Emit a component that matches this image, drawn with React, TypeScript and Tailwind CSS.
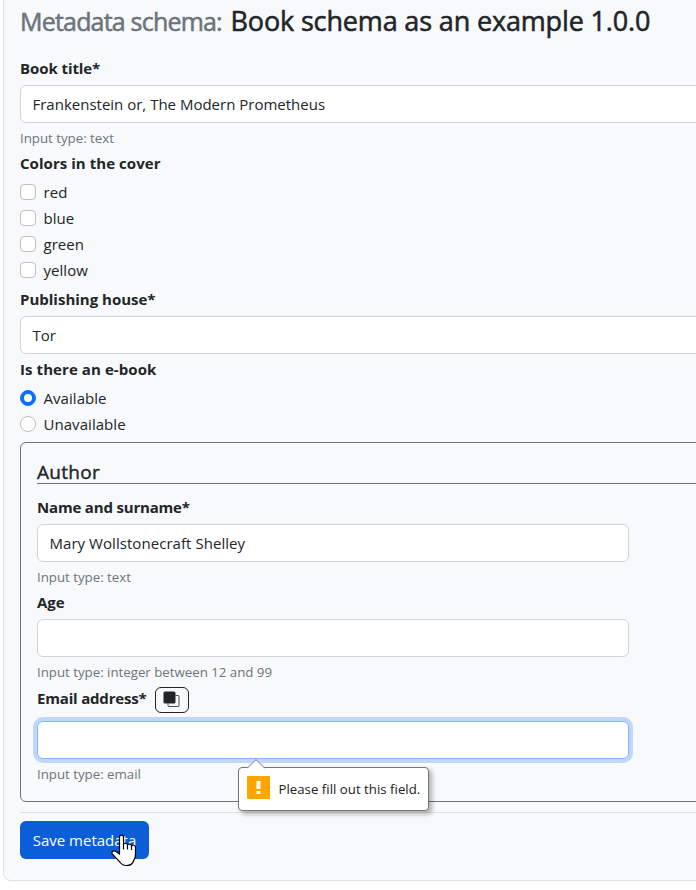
import type { ReactNode } from "react";

function Label({ children, className = "" }: { children: ReactNode; className?: string }) {
  return <div className={`h-7 text-[15px] font-bold leading-[22px] whitespace-nowrap ${className}`}>{children}</div>;
}

function Help({ children }: { children: ReactNode }) {
  return <div className="h-[29px] pt-1 text-[13.3px] leading-[22px] tracking-[-0.02px] text-[#6c757d] whitespace-nowrap">{children}</div>;
}

function Field({ value = "", focused = false, className = "" }: { value?: string; focused?: boolean; className?: string }) {
  return (
    <div
      className={`h-[38px] rounded-md border bg-white pr-3 pl-[11.5px] text-[15px] leading-9 ${
        focused ? "border-[#86b7fe] ring-4 ring-[#bed7fb]" : "border-[#ced4da]"
      } ${className}`}
    >
      {value}
    </div>
  );
}

function Choice({ label, radio = false, checked = false }: { label: string; radio?: boolean; checked?: boolean }) {
  return (
    <div className="flex h-[26px] items-start">
      <span
        className={`mt-1 mr-[7.5px] size-4 shrink-0 border ${radio ? "rounded-full" : "rounded"} ${
          checked ? "flex items-center justify-center border-[#0d6efd] bg-[#0d6efd]" : "border-[#bfbfbf] bg-white"
        }`}
      >
        {checked && <span className="size-2 rounded-full bg-white" />}
      </span>
      <span className="text-[15px] leading-6 tracking-[0.05px]">{label}</span>
    </div>
  );
}

export default function App() {
  return (
    <div className="relative h-[890px] w-full overflow-hidden bg-white font-['Open_Sans','Noto_Sans',sans-serif] text-[#212529]">
      <div className="ml-[3px] h-[881px] w-[760px] rounded-b-lg border-b border-l border-[#dee2e6] bg-[#f8f9fa] px-4">
        <h1 className="flex h-[57px] items-baseline pt-[4px] leading-[34px] whitespace-nowrap [-webkit-text-stroke:0.55px]">
          <span className="w-[210.5px] text-[25px] tracking-[-0.8px] text-[#6c757d]">Metadata schema:</span>
          <span className="text-[27px] tracking-[-0.15px]">Book schema as an example 1.0.0</span>
        </h1>
        <Label className="tracking-[-0.08px]">Book title*</Label>
        <Field value="Frankenstein or, The Modern Prometheus" />
        <Help>Input type: text</Help>
        <Label className="tracking-[0.05px]">Colors in the cover</Label>
        <Choice label="red" />
        <Choice label="blue" />
        <Choice label="green" />
        <Choice label="yellow" />
        <div className="mt-1">
          <Label>Publishing house*</Label>
        </div>
        <Field value="Tor" />
        <div className="mt-1">
          <Label className="tracking-[0.08px]">Is there an e-book</Label>
        </div>
        <Choice label="Available" radio checked />
        <Choice label="Unavailable" radio />

        <section className="mt-1 h-[360px] rounded-md border border-[#6c757d] px-4 pt-4">
          <h2 className="mb-3 h-[25px] border-b border-[#6c757d] text-[19px] leading-[26px] tracking-[0.3px] [-webkit-text-stroke:0.4px]">
            Author
          </h2>
          <Label className="tracking-[-0.18px]">Name and surname*</Label>
          <Field value="Mary Wollstonecraft Shelley" className="w-[592px] tracking-[0.05px]" />
          <Help>Input type: text</Help>
          <Label>Age</Label>
          <Field className="w-[592px]" />
          <Help>Input type: integer between 12 and 99</Help>
          <div className="flex h-[35px] items-start pt-px">
            <Label className="w-[110px] tracking-[-0.18px]">Email address*</Label>
            <button className="ml-2 flex h-[26px] w-[34px] items-center justify-center rounded-md border border-[#212529]">
              <svg width="18" height="18" viewBox="0 0 18 18">
                <path d="M12.5 4.5h2.500a1 1 0 0 1 1 1v9a1 1 0 0 1-1 1h-9a1 1 0 0 1-1-1V12.500" fill="none" stroke="#212529" strokeWidth="0.8" />
                <rect x="0.500" y="0.500" width="12" height="12" rx="1.500" fill="#212529" />
              </svg>
            </button>
          </div>
          <Field focused className="w-[592px]" />
          <Help>Input type: email</Help>
        </section>
        <hr className="mt-[10px] border-[#dee2e6]" />
        <button className="mt-2 h-[38px] w-[129px] rounded-md bg-[#0b5ed7] text-[15px] leading-[38px] whitespace-nowrap text-white">
          Save metadata
        </button>
      </div>

      <div className="absolute top-[767px] left-[238px] flex h-[44px] w-[191px] items-center rounded border border-[#767676] bg-white pl-2 text-[13.2px] text-[#212121] shadow-[3px_3px_5px_rgba(0,0,0,0.3)]">
        <svg className="absolute -top-[9px] left-[8px]" width="18" height="10" viewBox="0 0 18 10">
          <path d="M0.5 9 9 0.5 17.5 9V10H.5Z" fill="white" />
          <path d="M0.5 8.9 9 .6 17.5 8.9" fill="none" stroke="#767676" />
        </svg>
        <svg width="23" height="23" viewBox="0 0 23 23" className="mr-[8.5px] -mt-[3px] shrink-0">
          <rect width="23" height="23" rx="1" fill="#ffa500" />
          <path d="M9.5 5h4v8h-4zM9.5 15h4v3h-4z" fill="white" />
        </svg>
        <span className="pt-px tracking-[0.03px] whitespace-nowrap">Please fill out this field.</span>
      </div>

      <svg className="absolute top-[834px] left-[111px]" width="26" height="33" viewBox="0 0 26 33">
        <path
          d="M8.500 20V3c0-2.600 4-2.600 4 0v7.200c.5-1.400 3.700-1.200 4 .4.8-1 3.800-.6 4 .9 1-.8 4-.5 4 1.700V20c0 4-1.500 5.500-2 7-.7 2.500-3 4.500-7 4.500-4.500 0-6-2-7.500-4.500L1.200 20c-1.200-2.800 1.800-4 3.800-2.500Z"
          fill="white"
          stroke="black"
          strokeWidth="1.2"
        />
        <path d="M12.500 10V15.500M16.500 10.500V15.500M20.500 11.500V16" stroke="black" strokeWidth="1.2" />
      </svg>
    </div>
  );
}
